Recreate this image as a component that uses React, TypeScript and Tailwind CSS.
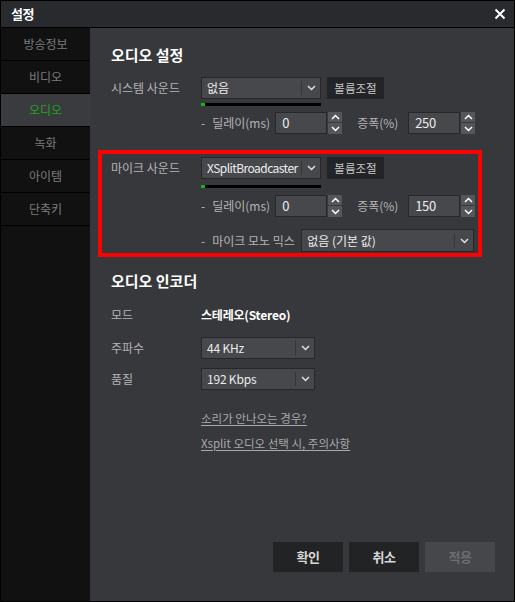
import React from "react";

const Chevron = ({ up = false }: { up?: boolean }) => (
  <svg width="9" height="6" viewBox="0 0 9 6">
    <path
      d={up ? "M1 5 L4.5 1.5 L8 5" : "M1 1 L4.5 4.5 L8 1"}
      fill="none"
      stroke="currentColor"
      strokeWidth="1.5"
    />
  </svg>
);

const Select = ({
  value,
  w,
  h = "h-[22px]",
  textCls = "text-[12px]",
}: {
  value: string;
  w: string;
  h?: string;
  textCls?: string;
}) => (
  <div className={`${w} ${h} flex items-stretch border border-[#26272a] bg-[#47484c] text-[#ececec]`}>
    <div className={`flex-1 flex items-center pl-[5px] overflow-hidden whitespace-nowrap ${textCls}`}>{value}</div>
    <div className="w-px my-[3px] bg-[#35363a]" />
    <div className="w-[18px] flex items-center justify-center text-[#e0e0e0]">
      <Chevron />
    </div>
  </div>
);

const Spin = ({ value }: { value: string }) => (
  <div className="flex items-stretch h-[22px]">
    <div className="w-[52px] border border-[#26272a] bg-[#47484c] text-[#ececec] flex items-center pl-[6px] text-[13px] tracking-[-0.3px]">
      {value}
    </div>
    <div className="w-[14px] ml-px flex flex-col justify-between">
      <div className="h-[10px] bg-[#55565a] flex items-center justify-center text-white">
        <Chevron up />
      </div>
      <div className="h-[11px] bg-[#55565a] flex items-center justify-center text-white">
        <Chevron />
      </div>
    </div>
  </div>
);

const Meter = () => (
  <div className="w-[120px] h-[3px] bg-black flex">
    <div className="w-[4px] h-full bg-[#19b319]" />
  </div>
);

const DelayRow = ({ gain }: { gain: string }) => (
  <div className="h-[22px] flex items-center text-[#b4b4b4] text-[12px]">
    <span>-</span>
    <span className="ml-[7px] w-[63px] whitespace-nowrap">딜레이(ms)</span>
    <Spin value="0" />
    <span className="ml-[15px] w-[51px] whitespace-nowrap">증폭(%)</span>
    <Spin value={gain} />
  </div>
);

const VolBtn = () => (
  <div className="ml-[6px] w-[57px] h-[22px] bg-[#232427] text-[#c8c8c8] flex items-center justify-center text-[11.5px]">
    볼륨조절
  </div>
);

export default function App() {
  const sideItems = ["방송정보", "비디오", "오디오", "녹화", "아이템", "단축키"];
  return (
    <div className="w-[515px] h-[602px] border border-black bg-[#37383c] flex flex-col leading-[18px] font-['Noto_Sans_CJK_KR','Noto_Sans',sans-serif] text-[12px]">
      <div className="h-[27px] shrink-0 bg-[#282a2d] border-b border-black flex items-center justify-between pl-[10px] pr-[8px]">
        <span className="text-white font-bold text-[13px] tracking-[-0.5px]">설정</span>
        <svg width="12" height="12" viewBox="0 0 12 12">
          <path d="M1.5 1.5 L10.5 10.5 M10.5 1.5 L1.5 10.5" stroke="white" strokeWidth="2" />
        </svg>
      </div>
      <div className="flex flex-1 min-h-0">
        <div className="w-[89px] shrink-0 bg-[#111111] flex flex-col">
          {sideItems.map((s) => (
            <div
              key={s}
              className={`h-[33px] border-b border-black flex items-center justify-center text-[12px] ${
                s === "오디오" ? "bg-[#3a3b3f] text-[#1fa21f]" : "text-[#7c7c7c]"
              }`}
            >
              {s}
            </div>
          ))}
        </div>
        <div className="flex-1 flex flex-col pl-[8px]">
          <div className="pl-[13px] mt-[17px] h-[20px] flex items-center text-white font-bold text-[15px]">오디오 설정</div>

          <div className="pl-[13px] mt-[12px] h-[22px] flex items-center">
            <span className="w-[90px] text-[#b4b4b4] whitespace-nowrap">시스템 사운드</span>
            <Select value="없음" w="w-[120px]" />
            <VolBtn />
          </div>
          <div className="pl-[103px] mt-[4px]">
            <Meter />
          </div>
          <div className="pl-[103px] mt-[6px]">
            <DelayRow gain="250" />
          </div>

          <div className="mt-[16px] w-[384px] border-4 border-[#ff0000] pl-[9px] pt-[3px] pb-[1px]">
            <div className="h-[22px] flex items-center">
              <span className="w-[90px] text-[#b4b4b4] whitespace-nowrap">마이크 사운드</span>
              <Select value="XSplitBroadcaster" w="w-[120px]" textCls="text-[12px] tracking-[-0.55px] pl-[4px]" />
              <VolBtn />
            </div>
            <div className="pl-[90px] mt-[6px]">
              <Meter />
            </div>
            <div className="pl-[90px] mt-[7px]">
              <DelayRow gain="150" />
            </div>
            <div className="pl-[90px] mt-[12px] h-[23px] flex items-center text-[#b4b4b4]">
              <span>-</span>
              <span className="ml-[7px] w-[89px] whitespace-nowrap">마이크 모노 믹스</span>
              <Select value="없음 (기본 값)" w="w-[173px]" h="h-[23px]" />
            </div>
          </div>

          <div className="pl-[13px] mt-[14px] h-[20px] flex items-center text-white font-bold text-[15px]">오디오 인코더</div>

          <div className="pl-[13px] mt-[14px] h-[20px] flex items-center">
            <span className="w-[90px] text-[#b4b4b4]">모드</span>
            <span className="text-white font-bold tracking-[-0.2px]">스테레오(Stereo)</span>
          </div>
          <div className="pl-[13px] mt-[12px] h-[22px] flex items-center">
            <span className="w-[90px] text-[#b4b4b4]">주파수</span>
            <Select value="44 KHz" w="w-[114px]" textCls="text-[12px] tracking-[-0.2px]" />
          </div>
          <div className="pl-[13px] mt-[9px] h-[22px] flex items-center">
            <span className="w-[90px] text-[#b4b4b4]">품질</span>
            <Select value="192 Kbps" w="w-[114px]" textCls="text-[12px] tracking-[-0.2px]" />
          </div>

          <div className="pl-[103px] mt-[19px] flex flex-col items-start gap-[7px] text-[11.5px] text-[#a8a8a8]">
            <span className="underline underline-offset-2 h-[18px]">소리가 안나오는 경우?</span>
            <span className="underline underline-offset-2 h-[18px]">Xsplit 오디오 선택 시, 주의사항</span>
          </div>

          <div className="mt-auto flex justify-end gap-[6px] pr-[19px] pb-[29px]">
            <div className="w-[70px] h-[30px] bg-[#222325] text-[#d8d8d8] font-bold text-[13px] tracking-[-0.5px] flex items-center justify-center">확인</div>
            <div className="w-[70px] h-[30px] bg-[#222325] text-[#d8d8d8] font-bold text-[13px] tracking-[-0.5px] flex items-center justify-center">취소</div>
            <div className="w-[70px] h-[30px] bg-[#46474b] text-[#6c6d70] font-bold text-[13px] tracking-[-0.5px] flex items-center justify-center">적용</div>
          </div>
        </div>
      </div>
    </div>
  );
}
